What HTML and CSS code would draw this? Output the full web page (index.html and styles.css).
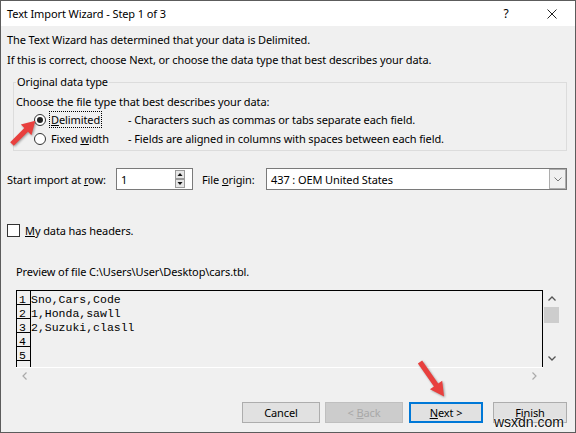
FILE: index.html
```html
<!DOCTYPE html>
<html lang="en">
<head>
  <meta charset="UTF-8">
  <title>Text Import Wizard</title>
  <link rel="stylesheet" href="styles.css">
</head>
<body>

<div class="window">
  <div class="titlebar">
    <span class="title">Text Import Wizard - Step 1 of 3</span>
    <span class="caption-btn">?</span>
    <span class="caption-btn">
      <svg width="10" height="10" viewBox="0 0 10 10"><path d="M0.5 0.5 L9.5 9.5 M9.5 0.5 L0.5 9.5" stroke="#222" stroke-width="1" fill="none"/></svg>
    </span>
  </div>

  <div class="content">
    <p class="line">The Text Wizard has determined that your data is Delimited.</p>
    <p class="line">If this is correct, choose Next, or choose the data type that best describes your data.</p>

    <fieldset class="group">
      <legend>Original data type</legend>
      <div class="prompt">Choose the file type that best describes your data:</div>
      <div class="option">
        <span class="radio checked"></span>
        <span class="opt-label"><span class="focus"><u>D</u>elimited</span></span>
        <span class="opt-desc">- Characters such as commas or tabs separate each field.</span>
      </div>
      <div class="option">
        <span class="radio"></span>
        <span class="opt-label"><span>Fixed <u>w</u>idth</span></span>
        <span class="opt-desc">- Fields are aligned in columns with spaces between each field.</span>
      </div>
    </fieldset>

    <div class="import-row">
      <span class="import-label">Start import at <u>r</u>ow:</span>
      <div class="spin">
        <span class="spin-value">1</span>
        <svg class="spin-btns" width="10" height="18" viewBox="0 0 10 18">
          <rect x="0.5" y="0.5" width="9" height="8" fill="#e6e6e6" stroke="#9a9a9a"/>
          <rect x="0.5" y="9.5" width="9" height="8" fill="#e6e6e6" stroke="#9a9a9a"/>
          <path d="M2.5 6 L5 3 L7.5 6 Z" fill="#111"/>
          <path d="M2.5 12 L5 15 L7.5 12 Z" fill="#111"/>
        </svg>
      </div>
      <span class="origin-label">File <u>o</u>rigin:</span>
      <div class="select">
        <span class="select-value">437 : OEM United States</span>
        <span class="select-btn">
          <svg width="8" height="5" viewBox="0 0 8 5"><path d="M0.5 0.5 L4 4 L7.5 0.5" stroke="#777" fill="none"/></svg>
        </span>
      </div>
    </div>

    <div class="headers">
      <span class="checkbox"></span>
      <span class="headers-text"><u>M</u>y data has headers.</span>
    </div>

    <div class="preview-label">Preview of file C:\Users\User\Desktop\cars.tbl.</div>

    <div class="preview">
      <div class="preview-main">
        <div class="grid">
          <div class="grid-row"><span class="num">1</span><span class="data">Sno,Cars,Code</span></div>
          <div class="grid-row"><span class="num">2</span><span class="data">1,Honda,sawll</span></div>
          <div class="grid-row"><span class="num">3</span><span class="data">2,Suzuki,clasll</span></div>
          <div class="grid-row"><span class="num">4</span><span class="data"></span></div>
          <div class="grid-row"><span class="num">5</span><span class="data"></span></div>
          <div class="grid-row"><span class="num"></span><span class="data"></span></div>
        </div>
        <div class="vscroll">
          <span class="sb-btn">
            <svg width="8" height="5" viewBox="0 0 8 5"><path d="M0.5 4.5 L4 1 L7.5 4.5" stroke="#555" stroke-width="1.3" fill="none"/></svg>
          </span>
          <span class="thumb"></span>
          <span class="sb-fill"></span>
          <span class="sb-btn">
            <svg width="8" height="5" viewBox="0 0 8 5"><path d="M0.5 0.5 L4 4 L7.5 0.5" stroke="#555" stroke-width="1.3" fill="none"/></svg>
          </span>
        </div>
      </div>
      <div class="hscroll">
        <div class="hscroll-track">
          <span class="sb-btn-h">
            <svg width="5" height="8" viewBox="0 0 5 8"><path d="M4.5 0.5 L1 4 L4.5 7.5" stroke="#aaa" stroke-width="1.2" fill="none"/></svg>
          </span>
          <span class="sb-btn-h">
            <svg width="5" height="8" viewBox="0 0 5 8"><path d="M0.5 0.5 L4 4 L0.5 7.5" stroke="#aaa" stroke-width="1.2" fill="none"/></svg>
          </span>
        </div>
        <div class="corner"></div>
      </div>
    </div>

    <div class="buttons">
      <button class="btn btn-cancel">Cancel</button>
      <button class="btn btn-back" disabled>&lt; <u>B</u>ack</button>
      <button class="btn btn-next"><u>N</u>ext &gt;</button>
      <button class="btn btn-finish"><u>F</u>inish</button>
    </div>
  </div>

  <!-- red callout arrows drawn on top of the dialog -->
  <svg class="arrows" width="576" height="433" viewBox="0 0 576 433">
    <g transform="translate(11 143) rotate(-45)">
      <polygon points="0,-2.6 20,-2.6 20,-7.5 33,0 20,7.5 20,2.6 0,2.6" fill="#e8403e"/>
    </g>
    <g transform="translate(419 361) rotate(55)">
      <polygon points="0,-2.6 28,-2.6 28,-7.5 42,0 28,7.5 28,2.6 0,2.6" fill="#e8403e"/>
    </g>
  </svg>

  <div class="watermark">wsxdn.com</div>
</div>

</body>
</html>
```

FILE: styles.css
```css
* { box-sizing: border-box; }
html, body { margin: 0; padding: 0; }
body { background: #fff; font-family: "Noto Sans", "DejaVu Sans", sans-serif; font-size: 11px; letter-spacing: -0.1px; color: #000; white-space: nowrap; }
u { text-decoration: underline; text-underline-offset: 1px; }

.window { position: relative; width: 576px; height: 433px; border: 1px solid #5c5c5c; background: #f0f0f0; overflow: hidden; }

/* title bar */
.titlebar { height: 25px; background: #fff; display: flex; align-items: center; padding-left: 6px; }
.title { flex: 1; }
.caption-btn { width: 46px; height: 25px; display: flex; align-items: center; justify-content: center; font-size: 12px; }

.content { padding: 4px 8px 0 6px; }
.line { margin: 0; height: 20px; line-height: 20px; }

/* original data type group */
.group { margin: 4px 0 0 6px; padding: 4px 0 2px 2px; border: 1px solid #dcdcdc; }
.group legend { padding: 0 1px; line-height: 16px; }
.prompt { line-height: 16px; }
.option { display: flex; align-items: center; height: 19px; padding-left: 18px; }
.radio { position: relative; width: 12px; height: 12px; border: 1px solid #333; border-radius: 50%; background: #fff; flex-shrink: 0; }
.radio.checked::after { content: ""; position: absolute; left: 2px; top: 2px; width: 6px; height: 6px; border-radius: 50%; background: #222; }
.opt-label { width: 78px; margin-left: 4px; line-height: 16px; }
.opt-label span { padding-left: 1px; padding-right: 1px; }
.opt-label .focus { outline: 1px dotted #000; }

/* start row / file origin */
.import-row { display: flex; align-items: center; height: 22px; margin-top: 17px; }
.import-label { width: 109px; }
.spin { display: flex; align-items: center; width: 77px; height: 22px; padding-left: 4px; border: 1px solid #7a7a7a; background: #fff; }
.spin-value { flex: 1; }
.spin-btns { margin-right: 7px; }
.origin-label { width: 64px; margin-left: 9px; }
.select { flex: 1; display: flex; align-items: center; height: 22px; padding-left: 4px; border: 1px solid #7a7a7a; background: #fff; }
.select-value { flex: 1; }
.select-btn { display: flex; align-items: center; justify-content: center; width: 17px; height: 20px; border: 1px solid #adadad; background: #f0f0f0; }

.headers { display: flex; align-items: center; height: 13px; margin-top: 34px; }
.checkbox { width: 13px; height: 13px; border: 1px solid #333; background: #fff; }
.headers-text { margin-left: 5px; }

.preview-label { margin-top: 27px; padding-left: 9px; line-height: 16px; }

/* preview grid */
.preview { width: 543px; margin: 10px 0 0 9px; }
.preview-main { display: flex; height: 77px; }
.grid { flex: 1; border: 1px solid #000; border-bottom: none; overflow: hidden; font-family: "Liberation Mono", monospace; font-size: 11.5px; letter-spacing: 0; }
.grid-row { display: flex; height: 14px; }
.num { width: 14px; height: 14px; padding: 4px 0 0 2px; line-height: 10px; border-right: 1px solid #000; border-bottom: 1px solid #000; }
.data { padding-top: 4px; line-height: 10px; white-space: pre; }
.vscroll { display: flex; flex-direction: column; width: 16px; padding-left: 1px; }
.sb-btn { display: flex; align-items: center; justify-content: center; height: 17px; }
.thumb { height: 16px; background: #cdcdcd; }
.sb-fill { flex: 1; }
.hscroll { display: flex; height: 16px; }
.hscroll-track { flex: 1; display: flex; justify-content: space-between; border-top: 1px solid #fff; }
.sb-btn-h { display: flex; align-items: center; justify-content: center; width: 17px; }
.corner { width: 16px; }

/* dialog buttons */
.buttons { display: flex; justify-content: flex-end; margin-top: 19px; }
.btn { height: 21px; padding: 0; font-family: inherit; font-size: 11px; letter-spacing: inherit; color: #000; background: #e1e1e1; border: 1px solid #adadad; }
.btn-cancel { width: 78px; }
.btn-back { width: 78px; margin-left: 5px; background: #cccccc; border-color: #bfbfbf; color: #a8a8a8; }
.btn-next { width: 74px; margin-left: 6px; border: 2px solid #0078d7; }
.btn-finish { width: 74px; margin-left: 10px; }

.arrows { position: absolute; left: 0; top: 0; pointer-events: none; filter: drop-shadow(1px 1px 1px rgba(0, 0, 0, 0.35)); }
.watermark { position: absolute; right: 11px; bottom: 2px; font-family: "Liberation Sans", sans-serif; font-size: 14px; letter-spacing: 0; color: #111; text-shadow: 0 0 2px #fff, 0 0 2px #fff; }
```
